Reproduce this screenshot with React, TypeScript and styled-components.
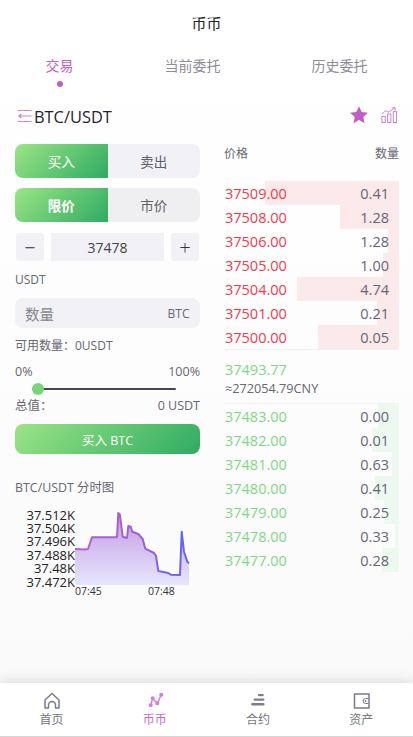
import React from "react";
import styled, { createGlobalStyle } from "styled-components";

const Global = createGlobalStyle`
  html, body { margin: 0; padding: 0; background: #fff; }
  * { box-sizing: border-box; }
  body { font-family: "Open Sans", "Noto Sans CJK SC", sans-serif; color: #333; }
`;

const GREEN = "linear-gradient(135deg, #9be585 0%, #2fab62 100%)";

const Page = styled.div`
  width: 413px; height: 737px; display: flex; flex-direction: column; overflow: hidden;
  background: linear-gradient(180deg, #ffffff 0%, #fdfdfd 50%, #f9f9f9 100%);
`;
const Title = styled.div`height: 44px; display: flex; align-items: center; justify-content: center; font-size: 15px; color: #222;`;
const Tabs = styled.div`display: flex; justify-content: space-around; height: 44px;`;
const Tab = styled.div<{ $on?: boolean }>`
  display: flex; flex-direction: column; align-items: center; padding-top: 11px;
  font-size: 14px; line-height: 22px; color: ${p => (p.$on ? "#bf5fc3" : "#8d8d96")};
`;
const Dot = styled.span`width: 6px; height: 6px; border-radius: 50%; background: #bf5fc3; margin-top: 4px;`;
const PairRow = styled.div`height: 56px; padding: 0 16px 0 17px; display: flex; align-items: center;`;
const PairName = styled.div`font-size: 16.4px; color: #23232b; flex: 1; margin-left: 2px;`;
const PairIcons = styled.div`display: flex; align-items: center; gap: 12px; margin-bottom: 2px;`;
const Body = styled.div`flex: 1; display: flex; padding: 0 14px 0 15px; gap: 24px; min-height: 0;`;
const Left = styled.div`width: 185px; display: flex; flex-direction: column;`;
const Right = styled.div`flex: 1; display: flex; flex-direction: column; margin-top: -1px;`;
const Toggle = styled.div<{ $tone: string }>`
  display: flex; height: 34px; border-radius: 8px; overflow: hidden; background: ${p => p.$tone}; margin-bottom: 10px;
`;
const ToggleItem = styled.div<{ $on?: boolean; $bold?: boolean }>`
  flex: 1; display: flex; align-items: center; justify-content: center; font-size: 13.5px;
  font-weight: ${p => (p.$bold ? 700 : 400)};
  color: ${p => (p.$on ? "#fff" : "#5f5f68")}; background: ${p => (p.$on ? GREEN : "transparent")};
`;
const Stepper = styled.div`display: flex; gap: 7px; padding: 1px; height: 30px; align-items: stretch;`;
const StepBtn = styled.div`width: 28px; background: #f1f1f6; border-radius: 3px; display: flex; align-items: center; justify-content: center; font-size: 20px; font-weight: 300; color: #333;`;
const StepValue = styled.div`flex: 1; background: #f1f1f6; display: flex; align-items: center; justify-content: center; font-size: 14px; color: #444;`;
const Unit = styled.div`font-size: 12px; color: #666670; line-height: 16px; margin-top: 10px;`;
const Field = styled.div`height: 30px; margin-top: 10px; background: #f1f1f6; border-radius: 8px; display: flex; align-items: center; justify-content: space-between; padding: 0 10.5px 0 10px;`;
const Placeholder = styled.span`font-size: 14.5px; color: #85858e;`;
const FieldUnit = styled.span`font-size: 12px; color: #666670;`;
const Note = styled.div`font-size: 12px; color: #666670; line-height: 16px; margin-top: 10px;`;
const Between = styled.div<{ $top: number }>`display: flex; justify-content: space-between; font-size: 12.5px; line-height: 16px; color: #666670; margin-top: ${p => p.$top}px;`;
const SliderWrap = styled.div`height: 14px; margin-top: 2px; position: relative; display: flex; align-items: center; padding: 0 24px 0 17px;`;
const Track = styled.div`height: 2px; flex: 1; background: #45455a; border-radius: 1px;`;
const Knob = styled.span`position: absolute; left: 17px; top: 1px; width: 12px; height: 12px; border-radius: 50%; background: #79d57a;`;
const BuyButton = styled.div`height: 30px; margin-top: 10px; border-radius: 8px; background: ${GREEN}; color: #fff; font-size: 12.5px; display: flex; align-items: center; justify-content: center;`;
const ChartTitle = styled.div`font-size: 12.4px; color: #666670; line-height: 16px; margin-top: 26px;`;
const ChartSvg = styled.svg`display: block; margin: 4px 0 0 -15px;`;
const HeadRow = styled.div`display: flex; justify-content: space-between; font-size: 12px; line-height: 16px; color: #666670; margin: 3px 0 19px;`;
const Book = styled.div<{ $edge: "bottom" | "top" }>`
  border-${p => p.$edge}: 1px solid #f1f1f3; display: flex; flex-direction: column;
`;
const Row = styled.div`height: 24px; position: relative; display: flex; justify-content: space-between; align-items: center; font-size: 14.5px; padding: 0 10px 0 1px;`;
const Bar = styled.span<{ $tone: string }>`position: absolute; top: 0; bottom: 0; right: 0; background: ${p => p.$tone};`;
const Price = styled.span<{ $tone: string }>`position: relative; color: ${p => p.$tone};`;
const Qty = styled.span`position: relative; color: #666678;`;
const Mid = styled.div`height: 53px; padding: 9px 0 0 1px; display: flex; flex-direction: column;`;
const MidPrice = styled.div`font-size: 14.5px; line-height: 22px; color: #7fd884;`;
const MidCny = styled.div`font-size: 12.7px; line-height: 14px; color: #666670;`;
const TabBar = styled.div`height: 54px; background: #fff; display: flex; box-shadow: 0 -2px 12px rgba(0,0,0,.13); border-bottom: 1px solid #d6d6d6; position: relative;`;
const NavItem = styled.div<{ $on?: boolean }>`
  flex: 1; display: flex; flex-direction: column; align-items: center; padding-top: 9px; font-size: 12px; line-height: 17px;
  color: ${p => (p.$on ? "#c46cd0" : "#77777c")};
`;
const NavIcon = styled.svg`display: block; width: 18px; height: 18px; margin-bottom: 1px;`;

const asks: [string, string, number][] = [
  ["37509.00", "0.41", 134], ["37508.00", "1.28", 59], ["37506.00", "1.28", 11], ["37505.00", "1.00", 16],
  ["37504.00", "4.74", 102], ["37501.00", "0.21", 22], ["37500.00", "0.05", 81],
];
const bids: [string, string, number][] = [
  ["37483.00", "0.00", 21], ["37482.00", "0.01", 27], ["37481.00", "0.63", 7], ["37480.00", "0.41", 24],
  ["37479.00", "0.25", 15], ["37478.00", "0.33", 4], ["37477.00", "0.28", 17],
];
const axis: [string, number][] = [["37.512K", 520], ["37.504K", 533], ["37.496K", 546], ["37.488K", 559.5], ["37.48K", 573], ["37.472K", 586.500]];

const pts = "75,549 84,549.5 88,549 92,537.3 117,537.3 118.3,513 120,515 122.7,536.7 127,538 128.3,526 130.7,526.7 132.3,531.7 138.3,534 142.7,539 145.3,548.7 154,553 156,556 158.3,571 168.3,573 170.7,574.7 180,575 181.7,531.7 184,551.7 187.3,561.7 189,563.3";

const Chart = () => (
  <ChartSvg width={210} height={100} viewBox="0 500 210 100">
    <defs>
      <linearGradient id="line" x1="0" x2="1" y1="0" y2="0">
        <stop offset="0" stopColor="#b062cf" /><stop offset="0.5" stopColor="#a25fd8" /><stop offset="1" stopColor="#5f66f5" />
      </linearGradient>
      <linearGradient id="fill" x1="0" x2="0" y1="0" y2="1">
        <stop offset="0" stopColor="#c498e0" /><stop offset="1" stopColor="#e6e6fe" />
      </linearGradient>
    </defs>
    <polygon points={`75,585 ${pts} 189,585`} fill="url(#fill)" />
    <polyline points={pts} fill="none" stroke="url(#line)" strokeWidth={2} strokeLinejoin="round" />
    {axis.map(([t, y]) => (
      <text key={t} x={75} y={y} textAnchor="end" fontSize={13} fill="#222" fontFamily="Open Sans, sans-serif">{t}</text>
    ))}
    <text x={75} y={595} fontSize={10.5} fill="#333" fontFamily="Open Sans, sans-serif">07:45</text>
    <text x={148} y={595} fontSize={10.5} fill="#333" fontFamily="Open Sans, sans-serif">07:48</text>
  </ChartSvg>
);

export default function App() {
  return (
    <Page>
      <Global />
      <Title>币币</Title>
      <Tabs>
        <Tab $on>交易<Dot /></Tab>
        <Tab>当前委托</Tab>
        <Tab>历史委托</Tab>
      </Tabs>
      <PairRow>
        <svg width="15" height="14" viewBox="0 0 15 14" fill="none" stroke="#cc85d2" strokeWidth="1">
          <path d="M0.500 1.500h14M5 7h9.500M0.500 12.500h14" />
          <path d="M4 5 1.500 7 4 9z" fill="#cc85d2" />
        </svg>
        <PairName>BTC/USDT</PairName>
        <PairIcons>
          <svg width="20" height="20" viewBox="0 0 20 20"><path d="M10 1.200l2.700 5.700 6.200.8-4.600 4.300 1.200 6.200L10 15.100l-5.500 3.100 1.200-6.200L1.100 7.700l6.200-.8z" fill="#bd5fc4" /></svg>
          <svg width="16" height="16" viewBox="0 0 17 17" fill="none" stroke="#c77ccd" strokeWidth="1">
            <rect x="1" y="10" width="3.500" height="6.500" /><rect x="7" y="7.500" width="3.500" height="9" /><rect x="13" y="5" width="3.500" height="11.500" />
            <path d="M1 7.500 5 4l3 1.500L14.500 1M12 .8h3v3" />
          </svg>
        </PairIcons>
      </PairRow>
      <Body>
        <Left>
          <Toggle $tone="#f1f1f6"><ToggleItem $on>买入</ToggleItem><ToggleItem>卖出</ToggleItem></Toggle>
          <Toggle $tone="#efeff1"><ToggleItem $on $bold>限价</ToggleItem><ToggleItem>市价</ToggleItem></Toggle>
          <Stepper>
            <StepBtn>−</StepBtn>
            <StepValue>37478</StepValue>
            <StepBtn>+</StepBtn>
          </Stepper>
          <Unit>USDT</Unit>
          <Field><Placeholder>数量</Placeholder><FieldUnit>BTC</FieldUnit></Field>
          <Note>可用数量：0USDT</Note>
          <Between $top={10}><span>0%</span><span>100%</span></Between>
          <SliderWrap><Track /><Knob /></SliderWrap>
          <Between $top={2}><span>总值：</span><span>0 USDT</span></Between>
          <BuyButton>买入 BTC</BuyButton>
          <ChartTitle>BTC/USDT 分时图</ChartTitle>
          <Chart />
        </Left>
        <Right>
          <HeadRow><span>价格</span><span>数量</span></HeadRow>
          <Book $edge="bottom">
            {asks.map(([p, q, w]) => (
              <Row key={p}><Bar $tone="#fce9ea" style={{ width: w }} /><Price $tone="#ee3b4b">{p}</Price><Qty>{q}</Qty></Row>
            ))}
          </Book>
          <Mid>
            <MidPrice>37493.77</MidPrice>
            <MidCny>≈272054.79CNY</MidCny>
          </Mid>
          <Book $edge="top">
            {bids.map(([p, q, w]) => (
              <Row key={p}><Bar $tone="#edf8ee" style={{ width: w }} /><Price $tone="#7fd884">{p}</Price><Qty>{q}</Qty></Row>
            ))}
          </Book>
        </Right>
      </Body>
      <TabBar>
        <NavItem>
          <NavIcon viewBox="0 0 18 18" fill="none" stroke="#7b7b8e" strokeWidth="1.500">
            <path d="M2 8 9 1.500 16 8v8h-3.500v-3a3.500 3.500 0 0 0-7 0v3H2z" strokeLinejoin="round" />
          </NavIcon>
          首页
        </NavItem>
        <NavItem $on>
          <NavIcon viewBox="0 0 18 18" fill="#d27fdc" stroke="#d27fdc" strokeWidth="1.500">
            <path d="M4.700 13.300 6.700 6.300 11.300 11.300 15.300 2.700" fill="none" />
            <circle cx="4.700" cy="13.300" r="1.300" /><circle cx="6.700" cy="6.300" r="1.300" /><circle cx="11.300" cy="11.300" r="1.300" /><circle cx="15.300" cy="2.700" r="1.300" />
          </NavIcon>
          币币
        </NavItem>
        <NavItem>
          <NavIcon viewBox="0 0 18 18" fill="#7d7d90">
            <rect x="8.800" y="2" width="6" height="2.200" rx="1.100" />
            <rect x="4.500" y="6.500" width="11" height="2.200" rx="1.100" />
            <rect x="2.200" y="11" width="13.300" height="2.500" rx="1.100" />
          </NavIcon>
          合约
        </NavItem>
        <NavItem>
          <NavIcon viewBox="0 0 18 18" fill="none" stroke="#7b7b8e" strokeWidth="1.500">
            <path d="M2.500 2h14.500v14H2.500z" />
            <path d="M16.500 6.500h-3a2.500 2.500 0 0 0 0 5h3" strokeWidth="1" />
            <circle cx="13.500" cy="9" r="1" fill="#7b7b8e" stroke="none" />
          </NavIcon>
          资产
        </NavItem>
      </TabBar>
    </Page>
  );
}
